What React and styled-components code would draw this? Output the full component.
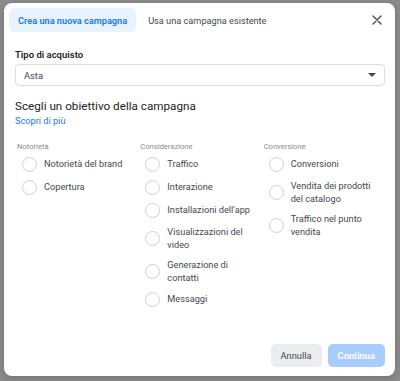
import React, { useState } from 'react'
import styled, { createGlobalStyle } from 'styled-components'

const GlobalStyle = createGlobalStyle`
  html, body {
    margin: 0;
    padding: 0;
    background: #8c8c8c;
  }
  body {
    font-family: Roboto, "Liberation Sans", Arial, sans-serif;
    -webkit-font-smoothing: antialiased;
  }
`

// Backdrop
const Backdrop = styled.div`
  width: 400px;
  height: 381px;
  background: #8c8c8c;
  padding: 3px 0 0 4px;
  box-sizing: border-box;
  overflow: hidden;
`

/* MODAL */
const Modal = styled.div`
  width: 391px;
  height: 373px;
  background: #ffffff;
  border-radius: 8px;
  box-shadow: 0 2px 8px rgba(0, 0, 0, 0.2);
  display: flex;
  flex-direction: column;
  box-sizing: border-box;
`

const Header = styled.div`
  display: flex;
  align-items: center;
  padding: 5px 10px 0 5px;
  gap: 3px;
`

const Tab = styled.button`
  height: 24px;
  padding: 0 9px;
  border: none;
  border-radius: 6px;
  font-family: inherit;
  font-size: 9.2px;
  font-weight: ${(p) => (p.active ? 600 : 400)};
  color: ${(p) => (p.active ? '#1877f2' : '#444950')};
  background: ${(p) => (p.active ? '#e7f3ff' : 'transparent')};
  cursor: pointer;
`

const Close = styled.button`
  margin-left: auto;
  width: 16px;
  height: 16px;
  padding: 0;
  border: none;
  background: transparent;
  display: flex;
  align-items: center;
  justify-content: center;
  cursor: pointer;
`

const Body = styled.div`
  flex: 1;
  padding: 0 10px 0 11px;
  display: flex;
  flex-direction: column;
`

const FieldLabel = styled.div`
  margin-top: 17px;
  font-size: 9.5px;
  font-weight: 600;
  color: #1c1e21;
  line-height: 12px;
`

const Select = styled.div`
  margin-top: 3px;
  height: 22px;
  border: 1px solid #dadde1;
  border-radius: 4px;
  display: flex;
  align-items: center;
  padding: 0 8px;
  font-size: 9.3px;
  color: #444950;
  box-sizing: border-box;
`

const Caret = styled.span`
  margin-left: auto;
  width: 0;
  height: 0;
  border-left: 4px solid transparent;
  border-right: 4px solid transparent;
  border-top: 4px solid #444950;
`

const Title = styled.h2`
  margin: 13px 0 0;
  font-size: 11.7px;
  font-weight: 400;
  color: #1c1e21;
  line-height: 14px;
`

const Link = styled.a`
  margin-top: 2px;
  font-size: 9.2px;
  color: #1877f2;
  line-height: 12px;
  text-decoration: none;
  cursor: pointer;
`

const Columns = styled.div`
  margin-top: 15px;
  display: grid;
  grid-template-columns: repeat(3, 1fr);
`

const Column = styled.div`
  display: flex;
  flex-direction: column;
  padding-left: 2px;
`

const ColumnTitle = styled.div`
  font-size: 7.6px;
  color: #8a8d91;
  line-height: 10px;
  margin-bottom: 5px;
`

const OptionList = styled.div`
  display: flex;
  flex-direction: column;
  gap: 8px;
  padding-left: 5px;
`

const Option = styled.label`
  display: flex;
  align-items: center;
  gap: 7px;
  cursor: pointer;
`

const Radio = styled.span`
  flex: none;
  width: 13px;
  height: 13px;
  border-radius: 50%;
  border: 1px solid ${(p) => (p.checked ? '#1877f2' : '#ccd0d5')};
  background: #fff;
  box-shadow: ${(p) => (p.checked ? 'inset 0 0 0 3px #fff, inset 0 0 0 8px #1877f2' : 'none')};
`

const OptionText = styled.span`
  max-width: 88px;
  font-size: 9.2px;
  line-height: 12.5px;
  color: #444950;
`

const Footer = styled.div`
  display: flex;
  justify-content: flex-end;
  gap: 6px;
  padding: 0 10px 9px 0;
`

const Button = styled.button`
  height: 23px;
  border: none;
  border-radius: 5px;
  font-family: inherit;
  font-size: 9.3px;
  padding: 0 10px;
  font-weight: ${(p) => (p.primary ? 600 : 400)};
  color: ${(p) => (p.primary ? '#ffffff' : '#444950')};
  background: ${(p) => (p.primary ? '#a8cdfc' : '#ebedf0')};
  min-width: ${(p) => (p.primary ? '57px' : '51px')};
  cursor: pointer;
`

const objectives = [
  {
    title: 'Notorietà',
    items: ['Notorietà del brand', 'Copertura'],
  },
  {
    title: 'Considerazione',
    items: [
      'Traffico',
      'Interazione',
      "Installazioni dell'app",
      'Visualizzazioni del video',
      'Generazione di contatti',
      'Messaggi',
    ],
  },
  {
    title: 'Conversione',
    items: ['Conversioni', 'Vendita dei prodotti del catalogo', 'Traffico nel punto vendita'],
  },
]

export default function App() {
  const [tab, setTab] = useState(0)
  const [selected, setSelected] = useState(null)

  return (
    <>
      <GlobalStyle />
      <Backdrop>
        <Modal>
          <Header>
            <Tab active={tab === 0} onClick={() => setTab(0)}>
              Crea una nuova campagna
            </Tab>
            <Tab active={tab === 1} onClick={() => setTab(1)}>
              Usa una campagna esistente
            </Tab>
            <Close aria-label="Chiudi">
              <svg width="10" height="10" viewBox="0 0 10 10">
                <path d="M1 1 L9 9 M9 1 L1 9" stroke="#444950" strokeWidth="1.4" strokeLinecap="round" />
              </svg>
            </Close>
          </Header>
          <Body>
            <FieldLabel>Tipo di acquisto</FieldLabel>
            <Select>
              Asta
              <Caret />
            </Select>
            <Title>Scegli un obiettivo della campagna</Title>
            <Link>Scopri di più</Link>
            <Columns>
              {objectives.map((col) => (
                <Column key={col.title}>
                  <ColumnTitle>{col.title}</ColumnTitle>
                  <OptionList>
                    {col.items.map((item) => (
                      <Option key={item} onClick={() => setSelected(item)}>
                        <Radio checked={selected === item} />
                        <OptionText>{item}</OptionText>
                      </Option>
                    ))}
                  </OptionList>
                </Column>
              ))}
            </Columns>
          </Body>
          <Footer>
            <Button>Annulla</Button>
            <Button primary disabled={!selected}>
              Continua
            </Button>
          </Footer>
        </Modal>
      </Backdrop>
    </>
  )
}
